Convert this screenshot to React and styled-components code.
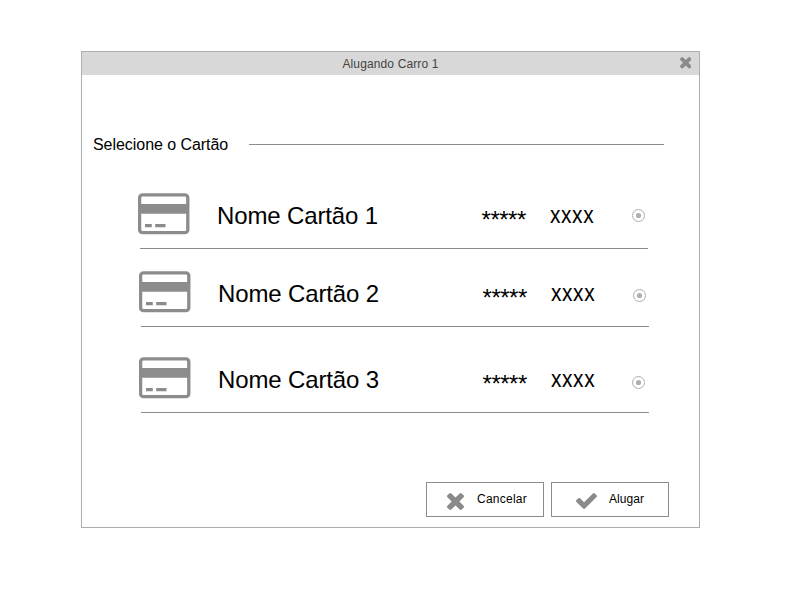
import React from "react";
import styled, { createGlobalStyle } from "styled-components";

const GlobalStyle = createGlobalStyle`
  * { box-sizing: border-box; }
  body {
    margin: 0;
    background: #fff;
    color: #000;
    font-family: "Liberation Sans", Arial, sans-serif;
  }
`;

const Page = styled.main`
  height: 600px;
  padding: 51px 0 0 81px;
  overflow: hidden;
`;

const Dialog = styled.section`
  display: flex;
  flex-direction: column;
  width: 619px;
  height: 477px;
  border: 1px solid #adadad;
  background: #fff;
`;

const TitleBar = styled.header`
  display: grid;
  grid-template-columns: 1fr auto 1fr;
  align-items: center;
  height: 23px;
  padding-right: 8px;
  padding-left: 8px;
  background: #d8d8d8;
`;

const Title = styled.h1`
  grid-column: 2;
  margin: 1px 0 0;
  color: #444;
  font-size: 12px;
  font-weight: 400;
  line-height: 14px;
  letter-spacing: 0.13px;
`;

const CloseButton = styled.button`
  display: flex;
  justify-self: end;
  margin-bottom: 1px;
  padding: 0;
  border: 0;
  background: none;
`;

const SectionHeading = styled.div`
  display: flex;
  align-items: center;
  height: 18px;
  margin: 60px 35px 0 11px;
`;

const SectionLabel = styled.h2`
  width: 156px;
  margin: 2px 0 0;
  font-size: 16px;
  font-weight: 400;
  line-height: 18px;
  letter-spacing: -0.05px;
  white-space: nowrap;
`;

const Rule = styled.div`
  flex: 1;
  height: 1px;
  background: #8c8c8c;
`;

const CardList = styled.div`
  display: flex;
  flex-direction: column;
  height: 259px;
  padding-top: 40px;
`;

const CardRow = styled.label`
  display: grid;
  grid-template-columns: 77px 264.6px 68.4px 81px 14px;
  align-items: start;
  flex: none;
  width: 508px;
  height: 56px;
  margin-top: ${(p) => p.$gap}px;
  margin-left: ${(p) => p.$indent}px;
  border-bottom: 1px solid #8c8c8c;
`;

const CardIconSvg = styled.svg`
  display: block;
  margin-left: -2px;
`;

const CardText = styled.span`
  margin-top: 9px;
  font-size: 24px;
  line-height: 28px;
  letter-spacing: -0.14px;
  white-space: nowrap;
`;

const MaskedDigits = styled(CardText)`
  margin-top: 13px;
  letter-spacing: -0.5px;
`;

const LastDigits = styled(CardText)`
  margin-top: 8px;
  letter-spacing: 0.7px;
  transform: scaleX(0.87);
  transform-origin: left;
`;

const RadioSvg = styled.svg`
  display: block;
  margin: ${(p) => p.$top}px 0 0 ${(p) => p.$left}px;
`;

const Actions = styled.footer`
  display: flex;
  gap: 7px;
  margin: 70px 0 0 344px;
`;

const ActionButton = styled.button`
  display: flex;
  align-items: center;
  width: 118px;
  height: 35px;
  padding: 0 0 0 ${(p) => p.$inset}px;
  border: 1px solid #8c8c8c;
  background: #fff;
  color: #000;
  font: 12px/14px "Liberation Sans", Arial, sans-serif;
`;

const ActionIcon = styled.span`
  display: flex;
  margin: 3px ${(p) => p.$gap}px 0 0;
`;

const ActionLabel = styled.span`
  margin-top: -2px;
  letter-spacing: ${(p) => p.$spacing || 0}px;
`;

function CrossIcon({ size }) {
  return (
    <svg width={size} height={size} viewBox="302 366 1188 1188" fill="#8a8a8a">
      <path d="M1490 1322q0 40-28 68l-136 136q-28 28-68 28t-68-28l-294-294-294 294q-28 28-68 28t-68-28l-136-136q-28-28-28-68t28-68l294-294-294-294q-28-28-28-68t28-68l136-136q28-28 68-28t68 28l294 294 294-294q28-28 68-28t68 28l136 136q28 28 28 68t-28 68l-294 294 294 294q28 28 28 68z" />
    </svg>
  );
}

function CheckIcon() {
  return (
    <svg width="21" height="16" viewBox="121 334 1550 1188" fill="#8a8a8a">
      <path d="M1671 566q0 40-28 68l-724 724-136 136q-28 28-68 28t-68-28l-136-136-362-362q-28-28-28-68t28-68l136-136q28-28 68-28t68 28l294 295 656-657q28-28 68-28t68 28l136 136q28 28 28 68z" />
    </svg>
  );
}

function CardIcon() {
  return (
    <CardIconSvg width="52" height="42" viewBox="0 0 52 42">
      <rect x="1.6" y="1.8" width="48.2" height="37.9" rx="3" fill="none" stroke="#8c8c8c" strokeWidth="3.3" />
      <path d="M2 11h47v9.8H2zM7 31h6.8v3.3H7zM17.2 31h10.3v3.3H17.2z" fill="#8c8c8c" />
    </CardIconSvg>
  );
}

function Radio({ top, left }) {
  return (
    <RadioSvg $top={top} $left={left} width="14" height="14" viewBox="0 0 14 14">
      <circle cx="7.5" cy="7.5" r="6" fill="#fff" stroke="#adadad" />
      <circle cx="7.5" cy="7.5" r="2.6" fill="#b0b0b0" />
    </RadioSvg>
  );
}

const cards = [
  { name: "Nome Cartão 1", gap: 0, indent: 58, radioTop: 15, radioLeft: 0 },
  { name: "Nome Cartão 2", gap: 22, indent: 59, radioTop: 17, radioLeft: 0 },
  { name: "Nome Cartão 3", gap: 30, indent: 59, radioTop: 18, radioLeft: -1 },
];

export default function App() {
  return (
    <Page>
      <GlobalStyle />
      <Dialog>
        <TitleBar>
          <Title>Alugando Carro 1</Title>
          <CloseButton aria-label="Fechar">
            <CrossIcon size={11.5} />
          </CloseButton>
        </TitleBar>
        <SectionHeading>
          <SectionLabel>Selecione o Cartão</SectionLabel>
          <Rule />
        </SectionHeading>
        <CardList>
          {cards.map((card) => (
            <CardRow key={card.name} $gap={card.gap} $indent={card.indent}>
              <CardIcon />
              <CardText>{card.name}</CardText>
              <MaskedDigits>*****</MaskedDigits>
              <LastDigits>xxxx</LastDigits>
              <Radio top={card.radioTop} left={card.radioLeft} />
            </CardRow>
          ))}
        </CardList>
        <Actions>
          <ActionButton $inset={20}>
            <ActionIcon $gap={13}>
              <CrossIcon size={17} />
            </ActionIcon>
            <ActionLabel $spacing={0.25}>Cancelar</ActionLabel>
          </ActionButton>
          <ActionButton $inset={24}>
            <ActionIcon $gap={12}>
              <CheckIcon />
            </ActionIcon>
            <ActionLabel $spacing={0.05}>Alugar</ActionLabel>
          </ActionButton>
        </Actions>
      </Dialog>
    </Page>
  );
}
